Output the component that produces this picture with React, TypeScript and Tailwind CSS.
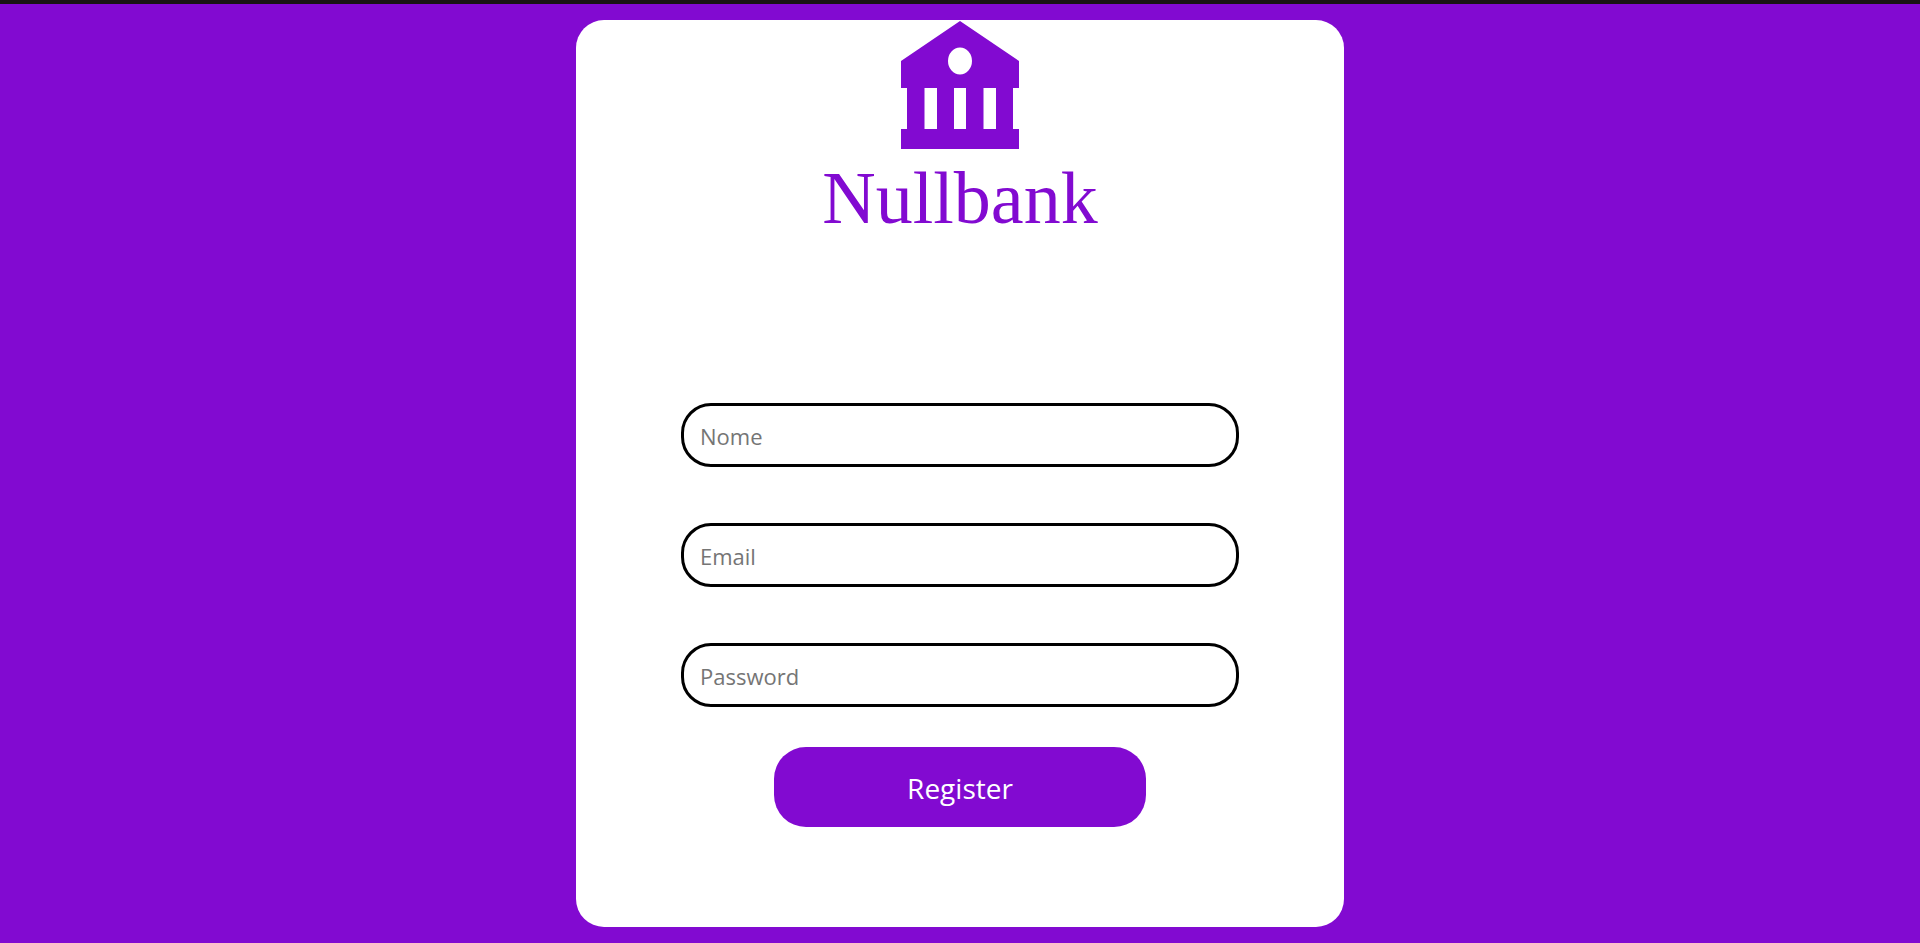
import React from "react";

type Field = { id: string; label: string; type: string };

const fields: Field[] = [
  { id: "name", label: "Nome", type: "text" },
  { id: "email", label: "Email", type: "email" },
  { id: "password", label: "Password", type: "password" },
];

function BankLogo() {
  return (
    <svg
      viewBox="0 0 118 128"
      className="h-32 w-[118px]"
      fill="#820ad1"
      fillRule="evenodd"
      aria-hidden="true"
    >
      <path d="M59 0L118 40V67H112V108H118V128H0V108H6V67H0V40ZM23.5 67V108H36V67ZM53 67V108H65V67ZM82.5 67V108H95V67ZM59 26.5A12 13.5 0 1 0 59 53.5A12 13.5 0 1 0 59 26.5Z" />
    </svg>
  );
}

export default function App() {
  return (
    <main className="flex min-h-screen justify-center border-t-4 border-[#191414] bg-[#820ad1] py-4 font-['Open_Sans','Noto_Sans',sans-serif]">
      <section className="flex w-2/5 min-w-80 flex-col items-center rounded-[28px] bg-white px-4 pt-px pb-[100px]">
        <BankLogo />
        <h1 className="mt-2 font-['Liberation_Serif',serif] text-[74px] leading-[82px] text-[#820ad1]">
          Nullbank
        </h1>
        <form
          className="mt-[164px] flex w-[558px] max-w-full flex-col items-center"
          onSubmit={(event) => event.preventDefault()}
        >
          <div className="flex w-full flex-col gap-14">
            {fields.map((field) => (
              <input
                key={field.id}
                id={field.id}
                name={field.id}
                type={field.type}
                aria-label={field.label}
                placeholder={field.label}
                className="block h-16 w-full rounded-[30px] border-[3px] border-black bg-white px-4 pt-0.5 text-[22px] text-black placeholder:text-[#757575]"
              />
            ))}
          </div>
          <button
            type="submit"
            className="mt-10 h-20 w-2/3 cursor-pointer rounded-[32px] bg-[#820ad1] pt-0.5 text-[28px] text-white"
          >
            Register
          </button>
        </form>
      </section>
    </main>
  );
}
